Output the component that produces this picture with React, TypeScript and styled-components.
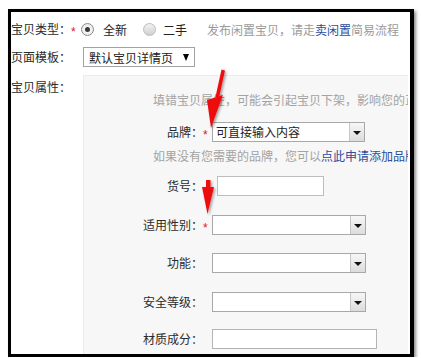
import React from "react";
import styled, { createGlobalStyle } from "styled-components";

const Global = createGlobalStyle`
  html, body { margin: 0; padding: 0; background: #fff; }
  body {
    font-family: "Noto Sans CJK SC", "Noto Sans", sans-serif;
    font-size: 12px;
    color: #2b2b2b;
  }
`;

const Frame = styled.div`
  position: relative;
  margin: 9px 0 0 8px;
  width: 399px;
  height: 342px;
  border-style: solid;
  border-color: #000;
  border-width: 3px 4px 3px 3px;
  box-shadow: 2px 2px 3px rgba(0, 0, 0, 0.45);
  overflow: hidden;
  background: #fff;
  display: flex;
  flex-direction: column;
`;

const Row = styled.div<{ $top: number }>`
  display: flex;
  align-items: center;
  height: 20px;
  margin-top: ${(p) => p.$top}px;
  white-space: nowrap;
  flex-shrink: 0;
`;

const Label = styled.div<{ $w?: number }>`
  width: ${(p) => (p.$w ? `${p.$w}px` : "auto")};
  line-height: 20px;
  flex-shrink: 0;
`;

const Star = styled.span<{ $w: number }>`
  width: ${(p) => p.$w}px;
  align-self: flex-start;
  padding-top: 3px;
  line-height: 20px;
  font-family: "Liberation Sans", Arial, sans-serif;
  font-size: 12px;
  color: #e0141e;
  flex-shrink: 0;
`;

const Radio = styled.span<{ $on?: boolean; $ml?: number }>`
  position: relative;
  width: 13px;
  height: 13px;
  box-sizing: border-box;
  border-radius: 50%;
  margin-left: ${(p) => p.$ml ?? 0}px;
  border: 1px solid ${(p) => (p.$on ? "#8c8c8c" : "#bcbcbc")};
  background: ${(p) =>
    p.$on
      ? "radial-gradient(circle, #ffffff 0%, #e2e2e2 100%)"
      : "linear-gradient(#f2f2f2, #d0d0d0)"};
  display: flex;
  align-items: center;
  justify-content: center;
  flex-shrink: 0;
  &::after {
    content: "";
    display: ${(p) => (p.$on ? "block" : "none")};
    width: 5px;
    height: 5px;
    border-radius: 50%;
    background: #3a3a3a;
  }
`;

const Option = styled.span<{ $ml: number }>`
  margin-left: ${(p) => p.$ml}px;
  color: #222;
`;

const Note = styled.span`
  margin-left: 20px;
  color: #9a9a9a;
`;

const Link = styled.span`
  color: #2a4d9e;
`;

const TemplateSelect = styled.div`
  width: 112px;
  height: 20px;
  box-sizing: border-box;
  border: 1px solid #a2a2a2;
  background: #fff;
  display: flex;
  align-items: center;
  padding-left: 5px;
  color: #222;
`;

const Caret = styled.span`
  margin-left: 10px;
  width: 0;
  height: 0;
  border-left: 3.5px solid transparent;
  border-right: 3.5px solid transparent;
  border-top: 7px solid #000;
`;

const AttrRow = styled.div`
  display: flex;
  align-items: flex-start;
  margin-top: 8px;
  flex: 1;
  min-height: 0;
`;

const AttrLabel = styled.div`
  width: 72px;
  margin-top: 2px;
  line-height: 20px;
  flex-shrink: 0;
`;

const Panel = styled.div`
  flex: 1;
  align-self: stretch;
  background: #f7f7f7;
  border-left: 1px solid #ebebeb;
  border-top: 1px solid #ebebeb;
  margin-right: 2px;
  display: flex;
  flex-direction: column;
  overflow: hidden;
`;

const Hint = styled.div<{ $top: number }>`
  margin-top: ${(p) => p.$top}px;
  padding-left: 69px;
  line-height: 20px;
  height: 20px;
  color: #a3a3a3;
  white-space: nowrap;
  flex-shrink: 0;
`;

const FieldLabel = styled.div`
  width: 119px;
  text-align: right;
  line-height: 20px;
  flex-shrink: 0;
`;

const SelectBox = styled.div<{ $w: number; $ml?: number }>`
  width: ${(p) => p.$w}px;
  height: 20px;
  margin-left: ${(p) => p.$ml ?? 0}px;
  box-sizing: border-box;
  border: 1px solid #a8a8a8;
  background: #fff;
  display: flex;
  align-items: stretch;
  flex-shrink: 0;
`;

const BoxText = styled.span`
  flex: 1;
  padding-left: 3px;
  line-height: 18px;
  color: #222;
`;

const DropBtn = styled.span`
  width: 15px;
  border-left: 1px solid #c6c6c6;
  background: linear-gradient(#f7f7f7, #dcdcdc);
  display: flex;
  align-items: center;
  justify-content: center;
  padding-top: 2px;
  box-sizing: border-box;
  &::after {
    content: "";
    width: 0;
    height: 0;
    border-left: 4px solid transparent;
    border-right: 4px solid transparent;
    border-top: 4px solid #111;
  }
`;

const TextInput = styled.div<{ $w: number; $ml?: number; $c?: string }>`
  width: ${(p) => p.$w}px;
  height: 20px;
  margin-left: ${(p) => p.$ml ?? 0}px;
  box-sizing: border-box;
  border: 1px solid ${(p) => p.$c ?? "#b4b4b4"};
  background: #fff;
  flex-shrink: 0;
`;

const Annot = styled.svg`
  position: absolute;
  left: 0;
  top: 0;
  pointer-events: none;
`;

const Select = ({ w, text }: { w: number; text?: string }) => (
  <SelectBox $w={w}>
    <BoxText>{text ?? ""}</BoxText>
    <DropBtn />
  </SelectBox>
);

export default function App() {
  return (
    <>
      <Global />
      <Frame>
        <Row $top={7}>
          <Label>宝贝类型：</Label>
          <Star $w={10}>*</Star>
          <Radio $on />
          <Option $ml={9}>全新</Option>
          <Radio $ml={16} />
          <Option $ml={7}>二手</Option>
          <Note>
            发布闲置宝贝，请走<Link>卖闲置</Link>简易流程
          </Note>
        </Row>
        <Row $top={8}>
          <Label $w={72}>页面模板：</Label>
          <TemplateSelect>
            默认宝贝详情页
            <Caret />
          </TemplateSelect>
        </Row>
        <AttrRow>
          <AttrLabel>宝贝属性：</AttrLabel>
          <Panel>
            <Hint $top={14}>
              填错宝贝属性，可能会引起宝贝下架，影响您的正常销售，请认真准确填写
            </Hint>
            <Row $top={12}>
              <FieldLabel>品牌：</FieldLabel>
              <Star $w={9}>*</Star>
              <Select w={153} text="可直接输入内容" />
            </Row>
            <Hint $top={4}>
              如果没有您需要的品牌，您可以<Link>点此申请添加品牌</Link>
            </Hint>
            <Row $top={10}>
              <FieldLabel>货号：</FieldLabel>
              <TextInput $w={107} $ml={14} $c="#bdbdbd" />
            </Row>
            <Row $top={19}>
              <FieldLabel>适用性别：</FieldLabel>
              <Star $w={9}>*</Star>
              <Select w={154} />
            </Row>
            <Row $top={18}>
              <FieldLabel>功能：</FieldLabel>
              <SelectBox $w={154} $ml={9}>
                <BoxText />
                <DropBtn />
              </SelectBox>
            </Row>
            <Row $top={19}>
              <FieldLabel>安全等级：</FieldLabel>
              <SelectBox $w={154} $ml={9}>
                <BoxText />
                <DropBtn />
              </SelectBox>
            </Row>
            <Row $top={17}>
              <FieldLabel>材质成分：</FieldLabel>
              <TextInput $w={165} $ml={9} />
            </Row>
          </Panel>
        </AttrRow>
        <Annot width="399" height="342" viewBox="0 0 399 342">
          <defs>
            <filter id="sh" x="-50%" y="-50%" width="200%" height="200%">
              <feDropShadow dx="1.5" dy="1.5" stdDeviation="1.2" floodColor="#000" floodOpacity="0.35" />
            </filter>
          </defs>
          <g fill="#ee1111" filter="url(#sh)">
            <polygon points="210.5,57.5 214,58.5 208,86 204.5,85" />
            <polygon points="196,88 212,83 200,116" />
            <rect x="195" y="168" width="4.5" height="9" />
            <polygon points="191,175 203,175 196.5,202" />
          </g>
        </Annot>
      </Frame>
    </>
  );
}
